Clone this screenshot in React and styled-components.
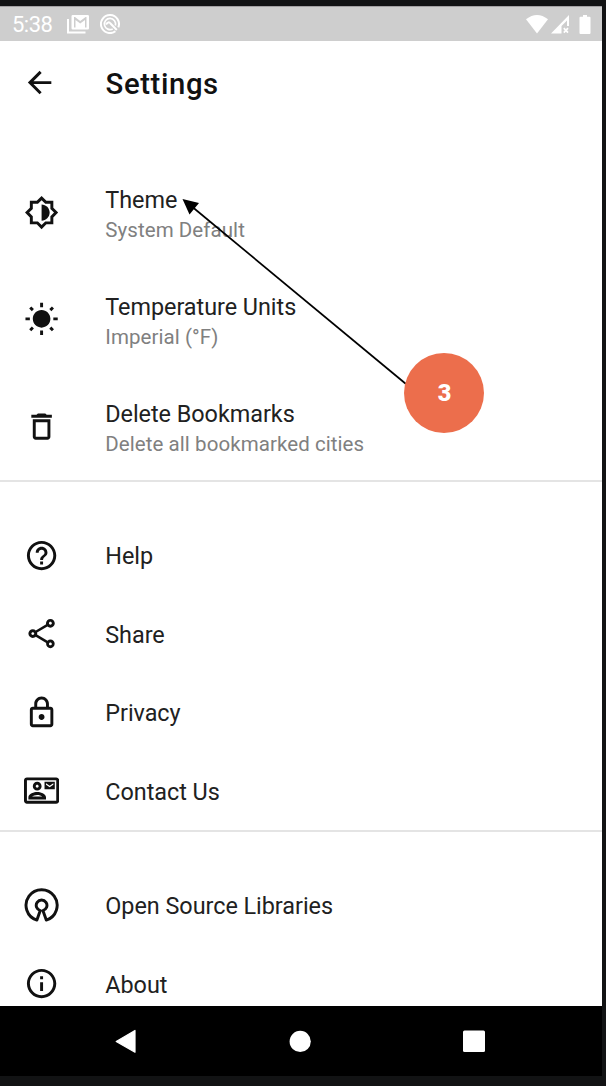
import React from "react";
import styled, { createGlobalStyle } from "styled-components";
import {
  MdArrowBack,
  MdOutlineBrightness6,
  MdWbSunny,
  MdDeleteOutline,
  MdHelpOutline,
  MdOutlineShare,
  MdOutlineLock,
  MdOutlineContactMail,
  MdInfoOutline,
} from "react-icons/md";

const GlobalStyle = createGlobalStyle`
  * { box-sizing: border-box; }
  body { margin: 0; background: #121314; font-family: Roboto, sans-serif; }
`;

const Frame = styled.div`
  position: relative;
  width: 606px;
  height: 1086px;
  padding: 6px 4px 10px 0;
  background: #121314;
  overflow: hidden;
`;

const Screen = styled.div`
  display: flex;
  flex-direction: column;
  height: 1070px;
  background: #fff;
`;

const StatusBar = styled.header`
  display: flex;
  align-items: center;
  flex: none;
  height: 35px;
  padding: 0 10px 0 12px;
  background: #cecece;
  border-top: 1px solid #a3a1a3;
  color: #fff;
`;

const Clock = styled.span`
  width: 55px;
  padding-top: 2px;
  font-size: 22px;
  line-height: 32px;
  letter-spacing: -0.5px;
`;

const StatusIcons = styled.div`
  display: flex;
  align-items: center;
  gap: ${(p) => p.$gap}px;
  margin-left: ${(p) => (p.$end ? "auto" : "0")};
  svg { display: block; }
`;

const AppBar = styled.div`
  display: flex;
  align-items: center;
  flex: none;
  height: 118px;
  padding: 0 22.4px 35px;
  color: #111;
`;

const Heading = styled.h1`
  margin: 2px 0 0 48px;
  font-size: 29.3px;
  font-weight: 500;
  line-height: 36px;
  letter-spacing: 0.6px;
`;

const Content = styled.main`
  flex: 1;
  min-height: 0;
  overflow: hidden;
`;

const Group = styled.section`
  padding-top: ${(p) => p.$top}px;
  border-top: ${(p) => (p.$top ? "2px solid #e4e4e4" : "0")};
`;

const Row = styled.div`
  display: flex;
  align-items: center;
  height: ${(p) => (p.$tall ? 107 : 78.6)}px;
  padding-left: 23.9px;
  color: #111;
`;

const Labels = styled.div`
  margin-left: 46.2px;
  padding-top: ${(p) => (p.$tall ? 5 : 2)}px;
`;

const Title = styled.div`
  font-size: 23.4px;
  line-height: 30px;
  letter-spacing: -0.03px;
  color: #212121;
`;

const Subtitle = styled.div`
  font-size: 20.5px;
  line-height: 30px;
  letter-spacing: 0.07px;
  color: #808080;
`;

const NavBar = styled.nav`
  display: flex;
  align-items: center;
  flex: none;
  height: 70px;
  padding: 0 117px 0 115px;
  justify-content: space-between;
  background: #000;
`;

const Annotation = styled.svg`
  position: absolute;
  left: 0;
  top: 0;
  width: 606px;
  height: 460px;
`;

const Step = styled.div`
  position: absolute;
  left: 404px;
  top: 353px;
  display: flex;
  align-items: center;
  justify-content: center;
  width: 80px;
  height: 80px;
  padding-left: 1px;
  border-radius: 50%;
  background: #ec6e4c;
  color: #fff;
  font-size: 23.5px;
  font-weight: 900;
`;

const OpenSourceIcon = ({ size }) => (
  <svg width={size} height={size} viewBox="0 0 24 24" fill="none" stroke="currentColor" strokeWidth="2" strokeLinejoin="round">
    <path d="M8.8 21.9A10.6 10.6 0 1 1 15.2 21.9L12.9 15.4A3.65 3.65 0 1 0 11.1 15.4Z" />
  </svg>
);

const MailStatus = () => (
  <svg width="22" height="19" viewBox="0 0 22 19">
    <path d="M1 4V17.4H18.5" fill="none" stroke="#fff" strokeWidth="2" />
    <path fill="#fff" fillRule="evenodd" d="M5.8 0H20.7Q22 0 22 1.3V13.2Q22 14.5 20.7 14.5H5.8Q4.5 14.5 4.5 13.2V1.3Q4.5 0 5.8 0ZM7 2V12.5H8.5V5L13.2 8.6L18 5V12.5H19.5V2H18.6L13.2 6L8 2Z" />
  </svg>
);

const CircleStatus = () => (
  <svg width="20" height="20" viewBox="0 0 20 20" fill="none" stroke="#fff">
    <path d="M15.4 17.2A9 9 0 1 1 18.3 13.4" strokeWidth="2" />
    <path d="M12.7 14.9A5.6 5.6 0 1 1 15.4 11.5" strokeWidth="1.7" />
    <path d="M6 10.5Q8.5 6.8 10.5 9.5L16.8 16" strokeWidth="2" />
  </svg>
);

const settings = [
  { title: "Theme", subtitle: "System Default", Icon: MdOutlineBrightness6 },
  { title: "Temperature Units", subtitle: "Imperial (°F)", Icon: MdWbSunny },
  { title: "Delete Bookmarks", subtitle: "Delete all bookmarked cities", Icon: MdDeleteOutline },
];
const support = [
  { title: "Help", Icon: MdHelpOutline },
  { title: "Share", Icon: MdOutlineShare },
  { title: "Privacy", Icon: MdOutlineLock },
  { title: "Contact Us", Icon: MdOutlineContactMail },
];
const about = [
  { title: "Open Source Libraries", Icon: OpenSourceIcon },
  { title: "About", Icon: MdInfoOutline },
];

const SettingRow = ({ title, subtitle, Icon }) => (
  <Row $tall={!!subtitle}>
    <Icon size={35.2} />
    <Labels $tall={!!subtitle}>
      <Title>{title}</Title>
      {subtitle && <Subtitle>{subtitle}</Subtitle>}
    </Labels>
  </Row>
);

const renderRows = (items) => items.map((item) => <SettingRow key={item.title} {...item} />);

export default function App() {
  return (
    <>
      <GlobalStyle />
      <Frame>
        <Screen>
          <StatusBar>
            <Clock>5:38</Clock>
            <StatusIcons $gap={11}>
              <MailStatus />
              <CircleStatus />
            </StatusIcons>
            <StatusIcons $end $gap={3}>
              <svg width="22" height="19" viewBox="0 0 22 19">
                <path fill="#fff" d="M0 4.3Q11-4.2 22 4.3L11 18.5Z" />
              </svg>
              <svg width="19" height="19" viewBox="0 0 19 19">
                <path fill="#fff" d="M0 18.5L18 0V11H16V5.5L10.5 11V18.5Z" />
                <path d="M12.8 13.2L17 17.7M17 13.2L12.8 17.7" stroke="#fff" strokeWidth="1.7" />
              </svg>
              <svg width="19" height="19" viewBox="0 0 19 19">
                <path fill="#fff" d="M10 0H14V1.8H16.5Q17.5 1.8 17.5 2.8V18Q17.5 19 16.5 19H7.5Q6.5 19 6.5 18V2.8Q6.5 1.8 7.5 1.8H10Z" />
              </svg>
            </StatusIcons>
          </StatusBar>
          <AppBar>
            <MdArrowBack size={35.2} />
            <Heading>Settings</Heading>
          </AppBar>
          <Content>
            <Group $top={0}>{renderRows(settings)}</Group>
            <Group $top={33.8}>{renderRows(support)}</Group>
            <Group $top={33.9}>{renderRows(about)}</Group>
          </Content>
          <NavBar>
            <svg width="22" height="24" viewBox="0 0 22 24">
              <path d="M1.2 12.5L20 1.5V23.2Z" fill="#fff" stroke="#fff" strokeWidth="1.2" strokeLinejoin="round" />
            </svg>
            <svg width="22" height="22" viewBox="0 0 22 22">
              <circle cx="11.2" cy="11.4" r="10.6" fill="#fff" />
            </svg>
            <svg width="22" height="22" viewBox="0 0 22 22">
              <rect y="0.4" width="22" height="21.6" rx="1.5" fill="#fff" />
            </svg>
          </NavBar>
        </Screen>
        <Annotation viewBox="0 0 606 460">
          <path d="M190 205L406 384" stroke="#000" strokeWidth="1.7" />
          <path d="M182.5 199L199 203L189.5 214.5Z" fill="#000" />
        </Annotation>
        <Step>3</Step>
      </Frame>
    </>
  );
}
